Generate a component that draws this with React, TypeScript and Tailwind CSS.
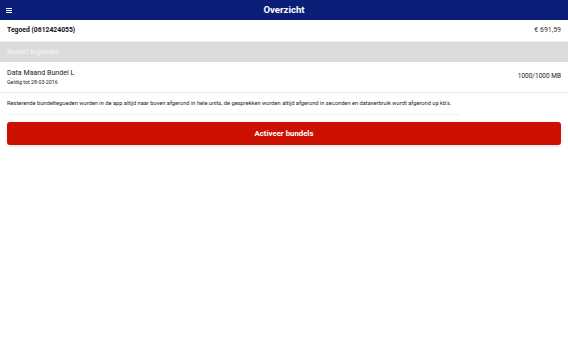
import React from "react";

const App = () => {
  return (
    <div className="w-[568px] h-[355px] bg-white font-['Roboto',sans-serif] text-[#222]">
      <header className="relative h-[20px] bg-[#0a1e78] flex items-center justify-center">
        <button type="button" className="absolute left-[6px] top-[8px] flex flex-col gap-[1px]">
          <span className="block w-[6px] h-[1px] bg-white" />
          <span className="block w-[6px] h-[1px] bg-white" />
          <span className="block w-[6px] h-[1px] bg-white" />
        </button>
        <h1 className="text-[9.6px] font-bold text-white leading-none">Overzicht</h1>
      </header>
      <div className="h-[22px] flex items-center justify-between px-[7px] border-b border-[#ececec]">
        <p className="text-[6.8px] font-bold text-[#111]">Tegoed (0612424055)</p>
        <p className="text-[7px] text-[#333]">€ 691,59</p>
      </div>
      <div className="h-[20px] bg-[#dcdcdc] flex items-center px-[7px]">
        <p className="text-[7px] text-[#f4f4f4]">Bundel tegoeden</p>
      </div>
      <div className="h-[31px] flex items-center justify-between px-[7px] border-b border-[#e6e6e6]">
        <div className="flex flex-col gap-[4px]">
          <p className="text-[7.1px] leading-none text-[#222]">Data Maand Bundel L</p>
          <p className="text-[5.3px] leading-none text-[#222]">Geldig tot 28-03-2016</p>
        </div>
        <p className="text-[6.5px] text-[#222]">1000/1000 MB</p>
      </div>
      <div className="px-[7px]">
        <p className="w-[453px] h-[22px] flex items-center text-[5.7px] text-[#222] border-b border-[#f0f0f0] whitespace-nowrap">
          Resterende bundeltegoeden worden in de app altijd naar boven afgerond in hele units, de gesprekken worden altijd afgerond in seconden en dataverbruik wordt afgerond op kb's.
        </p>
        <button
          type="button"
          className="mt-[7px] w-full h-[23px] rounded-[3px] bg-[#cc1100] flex items-center justify-center shadow-sm"
        >
          <span className="text-[7.8px] font-bold text-white">Activeer bundels</span>
        </button>
      </div>
    </div>
  );
};

export default App;
